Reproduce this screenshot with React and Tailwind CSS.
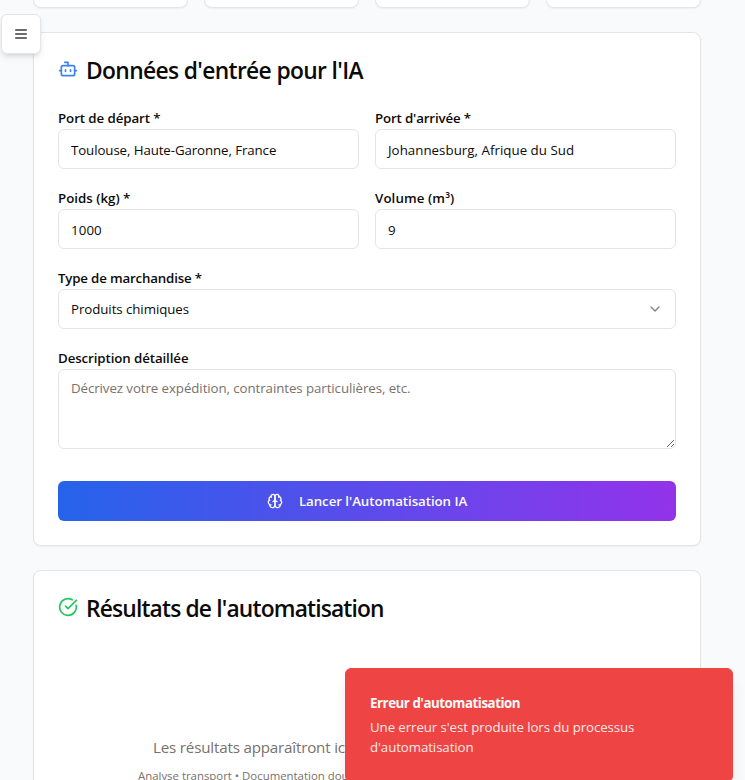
import React from "react";
import { Bot, CircleCheckBig, ChevronDown } from "lucide-react";

function MenuIcon() {
  return (
    <svg className="h-4 w-4" viewBox="0 0 24 24" fill="none" stroke="currentColor" strokeWidth="2" strokeLinecap="round">
      <path d="M4 6h16M4 12h16M4 18h16" />
    </svg>
  );
}

function BrainIcon() {
  return (
    <svg className="h-4 w-4" viewBox="0 0 24 24" fill="none" stroke="currentColor" strokeWidth="2" strokeLinecap="round" strokeLinejoin="round">
      <path d="M12 5a3 3 0 1 0-5.997.125 4 4 0 0 0-2.526 5.77 4 4 0 0 0 .556 6.588A4 4 0 1 0 12 18Z" />
      <path d="M12 5a3 3 0 1 1 5.997.125 4 4 0 0 1 2.526 5.77 4 4 0 0 1-.556 6.588A4 4 0 1 1 12 18Z" />
      <path d="M15 13a4.5 4.5 0 0 1-3-4 4.5 4.5 0 0 1-3 4" />
      <path d="M17.599 6.5a3 3 0 0 0 .399-1.375" />
      <path d="M6.003 5.125A3 3 0 0 0 6.401 6.5" />
      <path d="M3.477 10.896a4 4 0 0 1 .585-.396" />
      <path d="M19.938 10.5a4 4 0 0 1 .585.396" />
      <path d="M6 18a4 4 0 0 1-1.967-.516" />
      <path d="M19.967 17.484A4 4 0 0 1 18 18" />
    </svg>
  );
}

function Field({ label, labelClass, children }) {
  return (
    <div className="flex flex-col">
      <div className="flex h-6 items-center pt-1 text-[13.3px] leading-none font-semibold">
        <span className={labelClass}>{label}</span>
      </div>
      {children}
    </div>
  );
}

function Box({ children, className }) {
  return (
    <div className="flex h-10 items-center rounded-md border border-[#e5e5e5] bg-white px-3 pt-1 text-[13.3px]">
      <span className={className}>{children}</span>
    </div>
  );
}

export default function App() {
  return (
    <div className="relative h-[780px] w-[745px] overflow-hidden bg-[#f8fafc] font-['Open_Sans','Noto_Sans',sans-serif] text-[#0c0a09]">
      <div className="flex flex-col gap-6 pr-11 pl-[33px]">
        <div className="grid grid-cols-4 gap-4">
          {[0, 1, 2, 3].map((i) => (
            <div key={i} className="h-2 rounded-b-lg border border-t-0 border-[#e5e5e5] bg-white shadow-xs" />
          ))}
        </div>

        <section className="h-[514px] rounded-lg border border-[#e5e5e5] bg-white p-6 shadow-xs">
          <div className="flex h-6 items-center gap-2">
            <Bot className="h-5 w-5 text-[#3b82f6]" />
            <h2 className="pt-1 text-[22.8px] leading-none font-semibold tracking-[-0.64px] whitespace-nowrap">Données d'entrée pour l'IA</h2>
          </div>
          <div className="mt-6 flex flex-col gap-4">
            <div className="grid grid-cols-2 gap-4">
              <Field label="Port de départ *" labelClass="tracking-[-0.08px]">
                <Box className="tracking-[-0.1px]">Toulouse, Haute-Garonne, France</Box>
              </Field>
              <Field label="Port d'arrivée *" labelClass="tracking-[-0.15px]">
                <Box className="tracking-[0.03px]">Johannesburg, Afrique du Sud</Box>
              </Field>
              <Field label="Poids (kg) *">
                <Box className="tracking-[0.1px]">1000</Box>
              </Field>
              <Field label="Volume (m³)" labelClass="tracking-[0.1px]">
                <Box>9</Box>
              </Field>
            </div>
            <Field label="Type de marchandise *" labelClass="tracking-[-0.18px]">
              <div className="flex h-10 items-center justify-between rounded-md border border-[#e5e5e5] bg-white px-3 text-[13.3px]">
                <span className="pt-0.5 tracking-[-0.07px]">Produits chimiques</span>
                <ChevronDown className="h-4 w-4 opacity-50" />
              </div>
            </Field>
            <Field label="Description détaillée" labelClass="tracking-[-0.1px]">
              <textarea
                className="block h-20 w-full resize-y rounded-md border border-[#e5e5e5] bg-white px-3 py-2 text-[13.3px] leading-5 tracking-[-0.08px] placeholder:text-[#78716c]"
                placeholder="Décrivez votre expédition, contraintes particulières, etc."
              />
            </Field>
          </div>
          <button className="mt-8 flex h-10 w-full items-center justify-center gap-4 rounded-md bg-linear-to-r/srgb from-[#2563eb] to-[#9333ea] text-[13.3px] font-semibold text-[#fafaf9]">
            <BrainIcon />
            <span className="pt-0.5 tracking-[-0.06px]">Lancer l'Automatisation IA</span>
          </button>
        </section>

        <section className="h-[300px] rounded-lg border border-[#e5e5e5] bg-white p-6 shadow-xs">
          <div className="flex h-6 items-center gap-2">
            <CircleCheckBig className="h-5 w-5 text-[#22c55e]" />
            <h2 className="pt-1 text-[22.8px] leading-none font-semibold tracking-[-0.84px] whitespace-nowrap">Résultats de l'automatisation</h2>
          </div>
          <div className="mt-[116px] text-[#78716c]">
            <p className="pl-[95px] text-[15.2px] leading-6 tracking-[-0.2px]">Les résultats apparaîtront ici</p>
            <p className="mt-2 pl-20 text-[11.4px] leading-[17px]">Analyse transport • Documentation douanière</p>
          </div>
        </section>
      </div>

      <button className="absolute top-[14px] left-px flex h-10 w-10 items-center justify-center rounded-md border border-[#e5e5e5] bg-white text-[#0c0a09]/80 shadow-md">
        <MenuIcon />
      </button>

      <div className="absolute top-[668px] left-[345px] flex h-[114px] w-[388px] flex-col gap-1 rounded-md border border-[#ef4444] bg-[#ef4444] p-6 text-[13.3px] leading-5 text-[#fafaf9] shadow-lg">
        <div className="font-bold">
          <span className="tracking-[-0.46px]">Erreur d'automatisation</span>
        </div>
        <div className="opacity-90">
          <span className="tracking-[-0.1px]">
            Une erreur s'est produite lors du processus
            <br />
            d'automatisation
          </span>
        </div>
      </div>
    </div>
  );
}
